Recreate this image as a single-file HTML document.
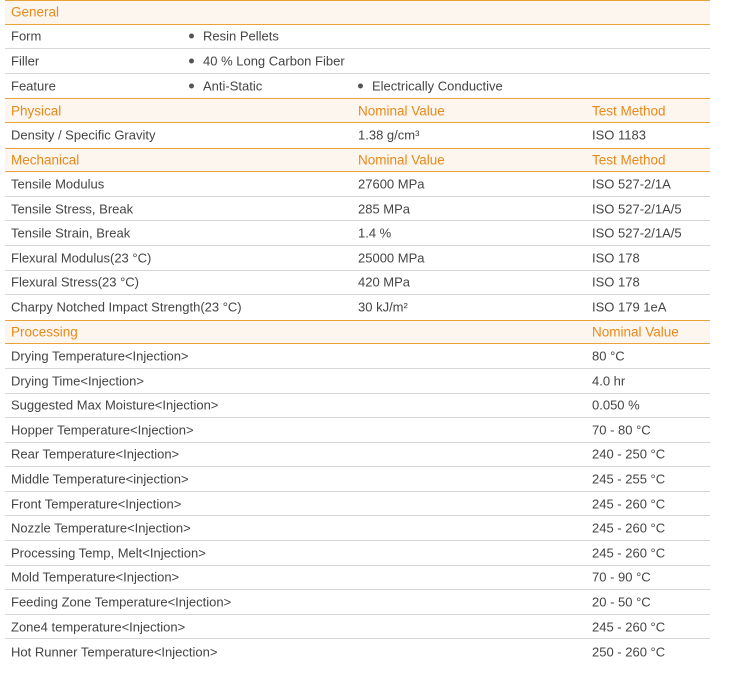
<!DOCTYPE html>
<html><head><meta charset="utf-8"><style>
body{margin:0;background:#fff;width:733px;height:675px;overflow:hidden;font-family:"Liberation Sans","DejaVu Sans",sans-serif;font-size:13px;color:#444;}
.t{position:absolute;left:5px;top:0;width:705px;}
.r{position:relative;height:24.6px;box-sizing:border-box;border-bottom:1px solid #d6d6d6;}
.h{background:#fdf6ef;color:#e8891a;border-bottom:1.5px solid #e8a33a;font-size:13.5px;}
.top{border-top:1.5px solid #e8a33a;}
.r span{position:absolute;top:50%;transform:translateY(-50%);white-space:nowrap;}
.a{left:6px}.b{left:184px}.c{left:353px}.d{left:587px}
.dot{display:inline-block;width:5px;height:5px;border-radius:50%;background:#555;margin-right:9px;vertical-align:2px}
</style></head><body><div class="t">
<div class="r h top"><span class="a">General</span></div>
<div class="r"><span class="a">Form</span><span class="b"><i class="dot"></i>Resin Pellets</span></div>
<div class="r"><span class="a">Filler</span><span class="b"><i class="dot"></i>40 % Long Carbon Fiber</span></div>
<div class="r" style="border-bottom:none"><span class="a">Feature</span><span class="b"><i class="dot"></i>Anti-Static</span><span class="c"><i class="dot"></i>Electrically Conductive</span></div>
<div class="r h top"><span class="a">Physical</span><span class="c">Nominal Value</span><span class="d">Test Method</span></div>
<div class="r" style="border-bottom:none"><span class="a">Density / Specific Gravity</span><span class="c">1.38 g/cm³</span><span class="d">ISO 1183</span></div>
<div class="r h top"><span class="a">Mechanical</span><span class="c">Nominal Value</span><span class="d">Test Method</span></div>
<div class="r"><span class="a">Tensile Modulus</span><span class="c">27600 MPa</span><span class="d">ISO 527-2/1A</span></div>
<div class="r"><span class="a">Tensile Stress, Break</span><span class="c">285 MPa</span><span class="d">ISO 527-2/1A/5</span></div>
<div class="r"><span class="a">Tensile Strain, Break</span><span class="c">1.4 %</span><span class="d">ISO 527-2/1A/5</span></div>
<div class="r"><span class="a">Flexural Modulus(23 °C)</span><span class="c">25000 MPa</span><span class="d">ISO 178</span></div>
<div class="r"><span class="a">Flexural Stress(23 °C)</span><span class="c">420 MPa</span><span class="d">ISO 178</span></div>
<div class="r" style="border-bottom:none"><span class="a">Charpy Notched Impact Strength(23 °C)</span><span class="c">30 kJ/m²</span><span class="d">ISO 179 1eA</span></div>
<div class="r h top"><span class="a">Processing</span><span class="d">Nominal Value</span></div>
<div class="r"><span class="a">Drying Temperature&lt;Injection&gt;</span><span class="d">80 °C</span></div>
<div class="r"><span class="a">Drying Time&lt;Injection&gt;</span><span class="d">4.0 hr</span></div>
<div class="r"><span class="a">Suggested Max Moisture&lt;Injection&gt;</span><span class="d">0.050 %</span></div>
<div class="r"><span class="a">Hopper Temperature&lt;Injection&gt;</span><span class="d">70 - 80 °C</span></div>
<div class="r"><span class="a">Rear Temperature&lt;Injection&gt;</span><span class="d">240 - 250 °C</span></div>
<div class="r"><span class="a">Middle Temperature&lt;injection&gt;</span><span class="d">245 - 255 °C</span></div>
<div class="r"><span class="a">Front Temperature&lt;Injection&gt;</span><span class="d">245 - 260 °C</span></div>
<div class="r"><span class="a">Nozzle Temperature&lt;Injection&gt;</span><span class="d">245 - 260 °C</span></div>
<div class="r"><span class="a">Processing Temp, Melt&lt;Injection&gt;</span><span class="d">245 - 260 °C</span></div>
<div class="r"><span class="a">Mold Temperature&lt;Injection&gt;</span><span class="d">70 - 90 °C</span></div>
<div class="r"><span class="a">Feeding Zone Temperature&lt;Injection&gt;</span><span class="d">20 - 50 °C</span></div>
<div class="r"><span class="a">Zone4 temperature&lt;Injection&gt;</span><span class="d">245 - 260 °C</span></div>
<div class="r" style="border-bottom:none"><span class="a">Hot Runner Temperature&lt;Injection&gt;</span><span class="d">250 - 260 °C</span></div>
</div></body></html>
